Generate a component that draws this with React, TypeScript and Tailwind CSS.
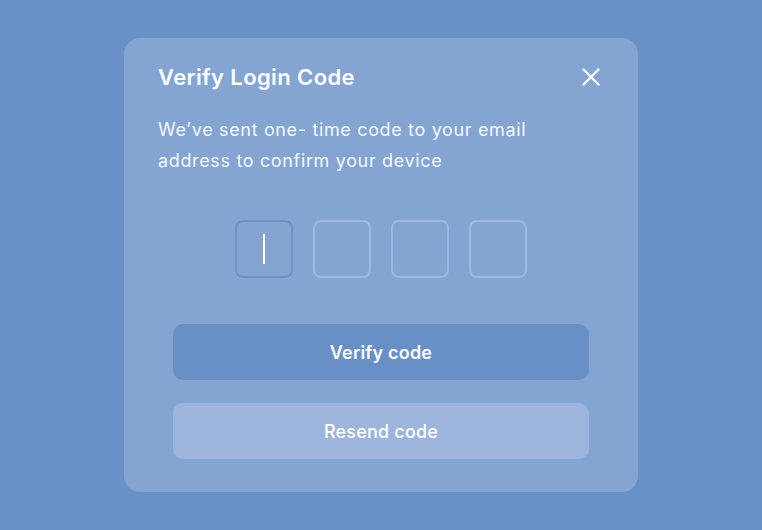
export default function App() {
  const boxes = [0, 1, 2, 3];

  return (
    <div
      className="h-[530px] w-full bg-[#6a91c7] pt-[38px]"
      style={{ fontFamily: "Inter, 'Open Sans', sans-serif" }}
    >
      <div className="mx-auto h-[454px] w-[514px] rounded-[16px] bg-[#84a5d2] px-[34px] pt-[24px] text-white">
        <div className="flex items-center justify-between">
          <h1 className="text-[22px] font-semibold leading-[30px] tracking-[0.4px]">Verify Login Code</h1>
          <button className="mr-[4px] text-white">
            <svg width="18" height="18" viewBox="0 0 18 18" fill="none" stroke="currentColor" strokeWidth="2.4" strokeLinecap="round">
              <path d="M1.5 1.5 L16.5 16.5 M16.5 1.5 L1.5 16.5" />
            </svg>
          </button>
        </div>

        <p className="mt-[22px] text-[18px] leading-[31px] tracking-[0.65px] text-white/95">
          We’ve sent one- time code to your email
          <br />
          address to confirm your device
        </p>

        <div className="mt-[44px] flex justify-center gap-[20px]">
          {boxes.map((b) => (
            <div
              key={b}
              className={`flex h-[58px] w-[58px] items-center justify-center rounded-[8px] border-2 ${
                b === 0 ? "border-[#6b92c8]" : "border-[#a1b9df]"
              }`}
            >
              {b === 0 && <div className="h-[30px] w-[2px] bg-white" />}
            </div>
          ))}
        </div>

        <div className="mt-[46px] flex flex-col gap-[23px] px-[15px]">
          <button className="h-[56px] w-full rounded-[10px] bg-[#6990c6] text-[18px] font-semibold tracking-[0.2px] text-white">
            Verify code
          </button>
          <button className="h-[56px] w-full rounded-[10px] bg-[#9db5dc] text-[18px] font-medium tracking-[0.2px] text-white">
            Resend code
          </button>
        </div>
      </div>
    </div>
  );
}
